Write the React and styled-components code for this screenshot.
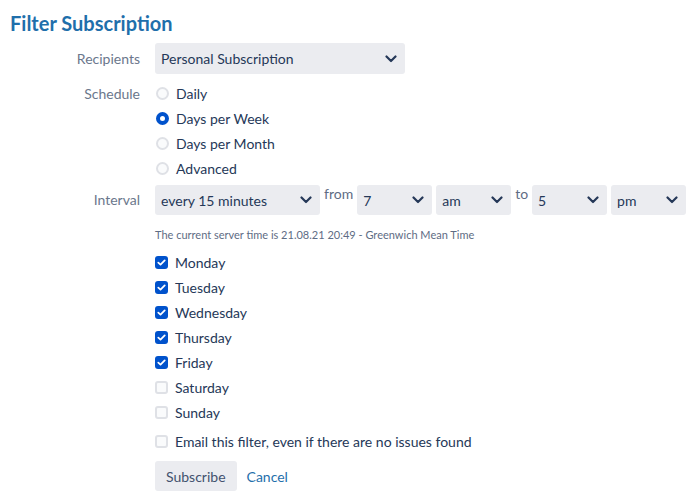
import React from "react";
import styled, { createGlobalStyle } from "styled-components";

const GlobalStyle = createGlobalStyle`
  body {
    margin: 0;
    background: #ffffff;
    font-family: "Lato", "Noto Sans", sans-serif;
    color: #172b4d;
  }
`;

const Page = styled.div`
  padding: 11px 10px 0 10px;
`;

const Heading = styled.h1`
  margin: 0 0 8px 0;
  font-size: 20px;
  line-height: 24px;
  font-weight: 700;
  color: #1f6fab;
`;

const Form = styled.div`
  display: grid;
  grid-template-columns: 130px 1fr;
  column-gap: 15px;
  align-items: start;
`;

const Label = styled.div`
  text-align: right;
  font-size: 14px;
  color: #6b778c;
  line-height: ${(p) => p.$lh || 25}px;
  margin-top: ${(p) => p.$mt || 0}px;
`;

const Field = styled.div`
  display: flex;
  flex-direction: column;
  margin-top: ${(p) => p.$mt || 0}px;
`;

const SelectBox = styled.div`
  box-sizing: border-box;
  width: ${(p) => p.$w}px;
  height: ${(p) => p.$h || 30}px;
  background: #ebecf0;
  border-radius: 3px;
  display: flex;
  align-items: center;
  justify-content: space-between;
  padding: 0 8px 0 6px;
  font-size: 14px;
  color: #253858;
`;

const Chevron = () => (
  <svg width="12" height="8" viewBox="0 0 12 8">
    <path d="M1.5 1.5 L6 6 L10.5 1.5" fill="none" stroke="#253858" strokeWidth="2.2" strokeLinecap="round" strokeLinejoin="round" />
  </svg>
);

const Select = ({ value, w, h }) => (
  <SelectBox $w={w} $h={h}>
    <span>{value}</span>
    <Chevron />
  </SelectBox>
);

const OptionRow = styled.div`
  display: flex;
  align-items: center;
  height: 25px;
  gap: 7px;
  font-size: 14px;
  color: #253858;
`;

const RadioDot = styled.span`
  box-sizing: border-box;
  width: 13px;
  height: 13px;
  border-radius: 50%;
  margin-left: 1px;
  background: ${(p) => (p.$on ? "#ffffff" : "#fafbfc")};
  border: ${(p) => (p.$on ? "4px solid #0052cc" : "2px solid #dfe1e6")};
`;

const Box = styled.span`
  box-sizing: border-box;
  width: 13px;
  height: 13px;
  border-radius: 3px;
  display: flex;
  align-items: center;
  justify-content: center;
  background: ${(p) => (p.$on ? "#0052cc" : "#fafbfc")};
  border: ${(p) => (p.$on ? "none" : "2px solid #dfe1e6")};
`;

const Check = () => (
  <svg width="9" height="7" viewBox="0 0 9 7">
    <path d="M1.3 3.6 L3.5 5.6 L7.7 1.4" fill="none" stroke="#ffffff" strokeWidth="1.8" strokeLinecap="round" strokeLinejoin="round" />
  </svg>
);

const Radio = ({ on, children }) => (
  <OptionRow>
    <RadioDot $on={on} />
    {children}
  </OptionRow>
);

const CheckOption = ({ on, children }) => (
  <OptionRow>
    <Box $on={on}>{on && <Check />}</Box>
    {children}
  </OptionRow>
);

const IntervalRow = styled.div`
  display: flex;
  align-items: flex-start;
  gap: 4px;
`;

const Word = styled.span`
  font-size: 14px;
  line-height: 18px;
  color: #5e6c84;
`;

const Hint = styled.div`
  font-size: 11px;
  color: #5e6c84;
  line-height: 14px;
  margin: 13px 0 8px 0;
`;

const Spacer = styled.div`
  height: 4px;
`;

const Actions = styled.div`
  display: flex;
  align-items: center;
  gap: 10px;
  margin-top: 7px;
`;

const Button = styled.button`
  height: 30px;
  padding: 0 11px;
  border: none;
  border-radius: 3px;
  background: #ebecf0;
  font-family: inherit;
  font-size: 14px;
  color: #42526e;
`;

const LinkText = styled.a`
  font-size: 14px;
  color: #1f6fab;
  text-decoration: none;
`;

const days = [
  ["Monday", true],
  ["Tuesday", true],
  ["Wednesday", true],
  ["Thursday", true],
  ["Friday", true],
  ["Saturday", false],
  ["Sunday", false],
];

export default function App() {
  return (
    <>
      <GlobalStyle />
      <Page>
        <Heading>Filter Subscription</Heading>
        <Form>
          <Label $lh={31}>Recipients</Label>
          <Field>
            <Select value="Personal Subscription" w={250} h={31} />
          </Field>

          <Label $mt={7}>Schedule</Label>
          <Field $mt={7}>
            <Radio>Daily</Radio>
            <Radio on>Days per Week</Radio>
            <Radio>Days per Month</Radio>
            <Radio>Advanced</Radio>
          </Field>

          <Label $lh={30} $mt={4}>Interval</Label>
          <Field $mt={4}>
            <IntervalRow>
              <Select value="every 15 minutes" w={165} />
              <Word>from</Word>
              <Select value="7" w={75} />
              <Select value="am" w={75} />
              <Word>to</Word>
              <Select value="5" w={75} />
              <Select value="pm" w={75} />
            </IntervalRow>
            <Hint>The current server time is 21.08.21 20:49 - Greenwich Mean Time</Hint>
            {days.map(([d, on]) => (
              <CheckOption key={d} on={on}>{d}</CheckOption>
            ))}
            <Spacer />
            <CheckOption>Email this filter, even if there are no issues found</CheckOption>
            <Actions>
              <Button>Subscribe</Button>
              <LinkText href="#">Cancel</LinkText>
            </Actions>
          </Field>
        </Form>
      </Page>
    </>
  );
}
